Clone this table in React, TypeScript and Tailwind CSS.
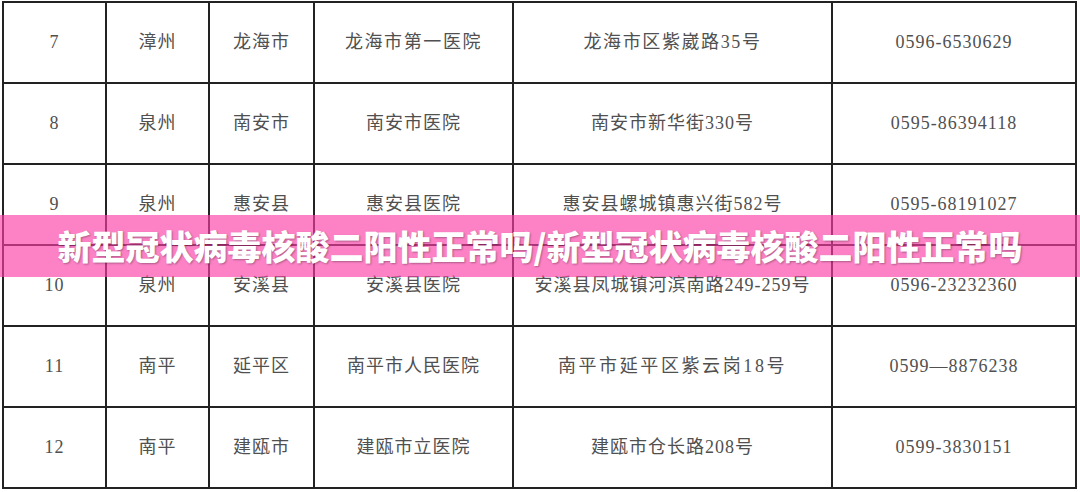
import React from "react";

// Row data: [no, city, county, hospital, address, phone]
const rows: string[][] = [
  ["7", "漳州", "龙海市", "龙海市第一医院", "龙海市区紫崴路35号", "0596-6530629"],
  ["8", "泉州", "南安市", "南安市医院", "南安市新华街330号", "0595-86394118"],
  ["9", "泉州", "惠安县", "惠安县医院", "惠安县螺城镇惠兴街582号", "0595-68191027"],
  ["10", "泉州", "安溪县", "安溪县医院", "安溪县凤城镇河滨南路249-259号", "0596-23232360"],
  ["11", "南平", "延平区", "南平市人民医院", "南平市延平区紫云岗18号", "0599—8876238"],
  ["12", "南平", "建瓯市", "建瓯市立医院", "建瓯市仓长路208号", "0599-3830151"],
];

// cells whose text is set wider in the source sheet
const wide: Record<string, string> = {
  龙海市第一医院: "tracking-[1.6px]",
  龙海市区紫崴路35号: "tracking-[1.6px]",
  南平市延平区紫云岗18号: "tracking-[2.6px]",
  南平市人民医院: "tracking-[1px]",
};

const cols = "grid-cols-[103px_103px_105px_199px_319px_244px]";

export default function App() {
  return (
    <div className="relative h-[492px] w-[1080px] overflow-hidden bg-white">
      <div
        className={`ml-[2px] mt-[1px] grid w-[1075px] ${cols} border-l-2 border-t-2 border-[#222] text-[18px] text-[#505050]`}
        style={{ fontFamily: '"Liberation Serif", "Noto Sans CJK SC", serif' }}
      >
        {rows.map((r, i) =>
          r.map((c, j) => (
            <div
              key={`${i}-${j}`}
              className={`flex h-[81px] items-center justify-center border-b-2 border-r-2 border-[#222] ${
                wide[c] ?? "tracking-[1px]"
              }`}
            >
              {c}
            </div>
          ))
        )}
      </div>

      {/* title banner laid over the table */}
      <div className="absolute left-0 top-[215px] flex h-[62px] w-full items-center justify-center bg-[#fb3fa6]/65">
        <span
          className="text-[34px] font-black leading-none text-white [text-shadow:1px_1px_2px_rgba(0,0,0,0.3)]"
          style={{ fontFamily: '"Noto Sans CJK SC", "Noto Sans", sans-serif' }}
        >
          新型冠状病毒核酸二阳性正常吗/新型冠状病毒核酸二阳性正常吗
        </span>
      </div>
    </div>
  );
}
